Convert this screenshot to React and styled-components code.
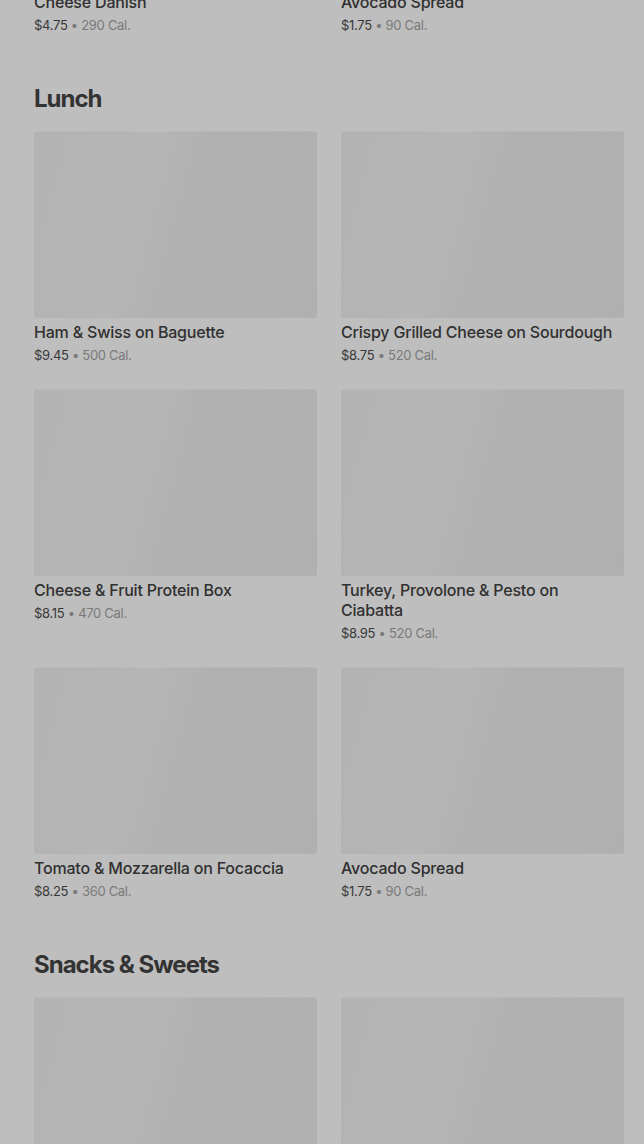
import React from 'react';
import styled, { createGlobalStyle } from 'styled-components';

const GlobalStyle = createGlobalStyle`
  html, body {
    margin: 0;
    padding: 0;
    background: #bebebe;
    overflow: hidden;
  }
  body {
    font-family: Inter, "Noto Sans", "Liberation Sans", sans-serif;
    -webkit-font-smoothing: antialiased;
  }
`;

const menu = [
  {
    id: 'breakfast',
    title: 'Breakfast',
    items: [
      { id: 'b1', name: 'Cheese Danish', price: '$4.75', cal: 290 },
      { id: 'b2', name: 'Avocado Spread', price: '$1.75', cal: 90 },
    ],
  },
  {
    id: 'lunch',
    title: 'Lunch',
    items: [
      { id: 'l1', name: 'Ham & Swiss on Baguette', price: '$9.45', cal: 500 },
      { id: 'l2', name: 'Crispy Grilled Cheese on Sourdough', price: '$8.75', cal: 520 },
      { id: 'l3', name: 'Cheese & Fruit Protein Box', price: '$8.15', cal: 470 },
      { id: 'l4', name: 'Turkey, Provolone & Pesto on Ciabatta', price: '$8.95', cal: 520 },
      { id: 'l5', name: 'Tomato & Mozzarella on Focaccia', price: '$8.25', cal: 360 },
      { id: 'l6', name: 'Avocado Spread', price: '$1.75', cal: 90 },
    ],
  },
  {
    id: 'snacks',
    title: 'Snacks & Sweets',
    items: [
      { id: 's1', name: 'Chocolate Chip Cookie', price: '$2.95', cal: 380 },
      { id: 's2', name: 'Blueberry Muffin', price: '$3.45', cal: 420 },
    ],
  },
];

const Page = styled.main`
  display: flex;
  flex-direction: column;
  gap: 47px;
  padding: 0 20px 0 34px;
  margin-top: -248px;
`;

const Section = styled.section`
  display: flex;
  flex-direction: column;
`;

const Heading = styled.h2`
  margin: 1px 0 16px;
  font-size: 24px;
  line-height: 32px;
  font-weight: 700;
  letter-spacing: -1px;
  color: #333333;
`;

const Grid = styled.ul`
  list-style: none;
  margin: 0;
  padding: 0;
  display: grid;
  grid-template-columns: 283px 283px;
  column-gap: 24px;
  row-gap: 24px;
  align-items: start;
`;

const Card = styled.li`
  display: flex;
  flex-direction: column;
`;

const Thumb = styled.div`
  height: 187px;
  border-radius: 2px;
  background: linear-gradient(
    105deg,
    #b3b3b3 0%,
    #b5b5b5 38%,
    #b1b1b1 52%,
    #b0b0b0 100%
  );
  box-shadow: inset 0 1px 0 rgba(255, 255, 255, 0.08);
`;

const Name = styled.div`
  margin-top: 4px;
  font-size: 16px;
  line-height: 20px;
  font-weight: 500;
  letter-spacing: -0.2px;
  color: #303030;
`;

const Meta = styled.div`
  margin-top: 3px;
  font-size: 13px;
  line-height: 20px;
  letter-spacing: -0.3px;
  color: #7a7a7a;
`;

const Price = styled.span`
  color: #383838;
`;

const MenuSection = ({ title, items }) => (
  <Section>
    <Heading>{title}</Heading>
    <Grid>
      {items.map((item) => (
        <Card key={item.id}>
          <Thumb />
          <Name>{item.name}</Name>
          <Meta>
            <Price>{item.price}</Price> • {item.cal} Cal.
          </Meta>
        </Card>
      ))}
    </Grid>
  </Section>
);

const App = () => (
  <>
    <GlobalStyle />
    <Page>
      {menu.map((section) => (
        <MenuSection key={section.id} title={section.title} items={section.items} />
      ))}
    </Page>
  </>
);

export default App;
